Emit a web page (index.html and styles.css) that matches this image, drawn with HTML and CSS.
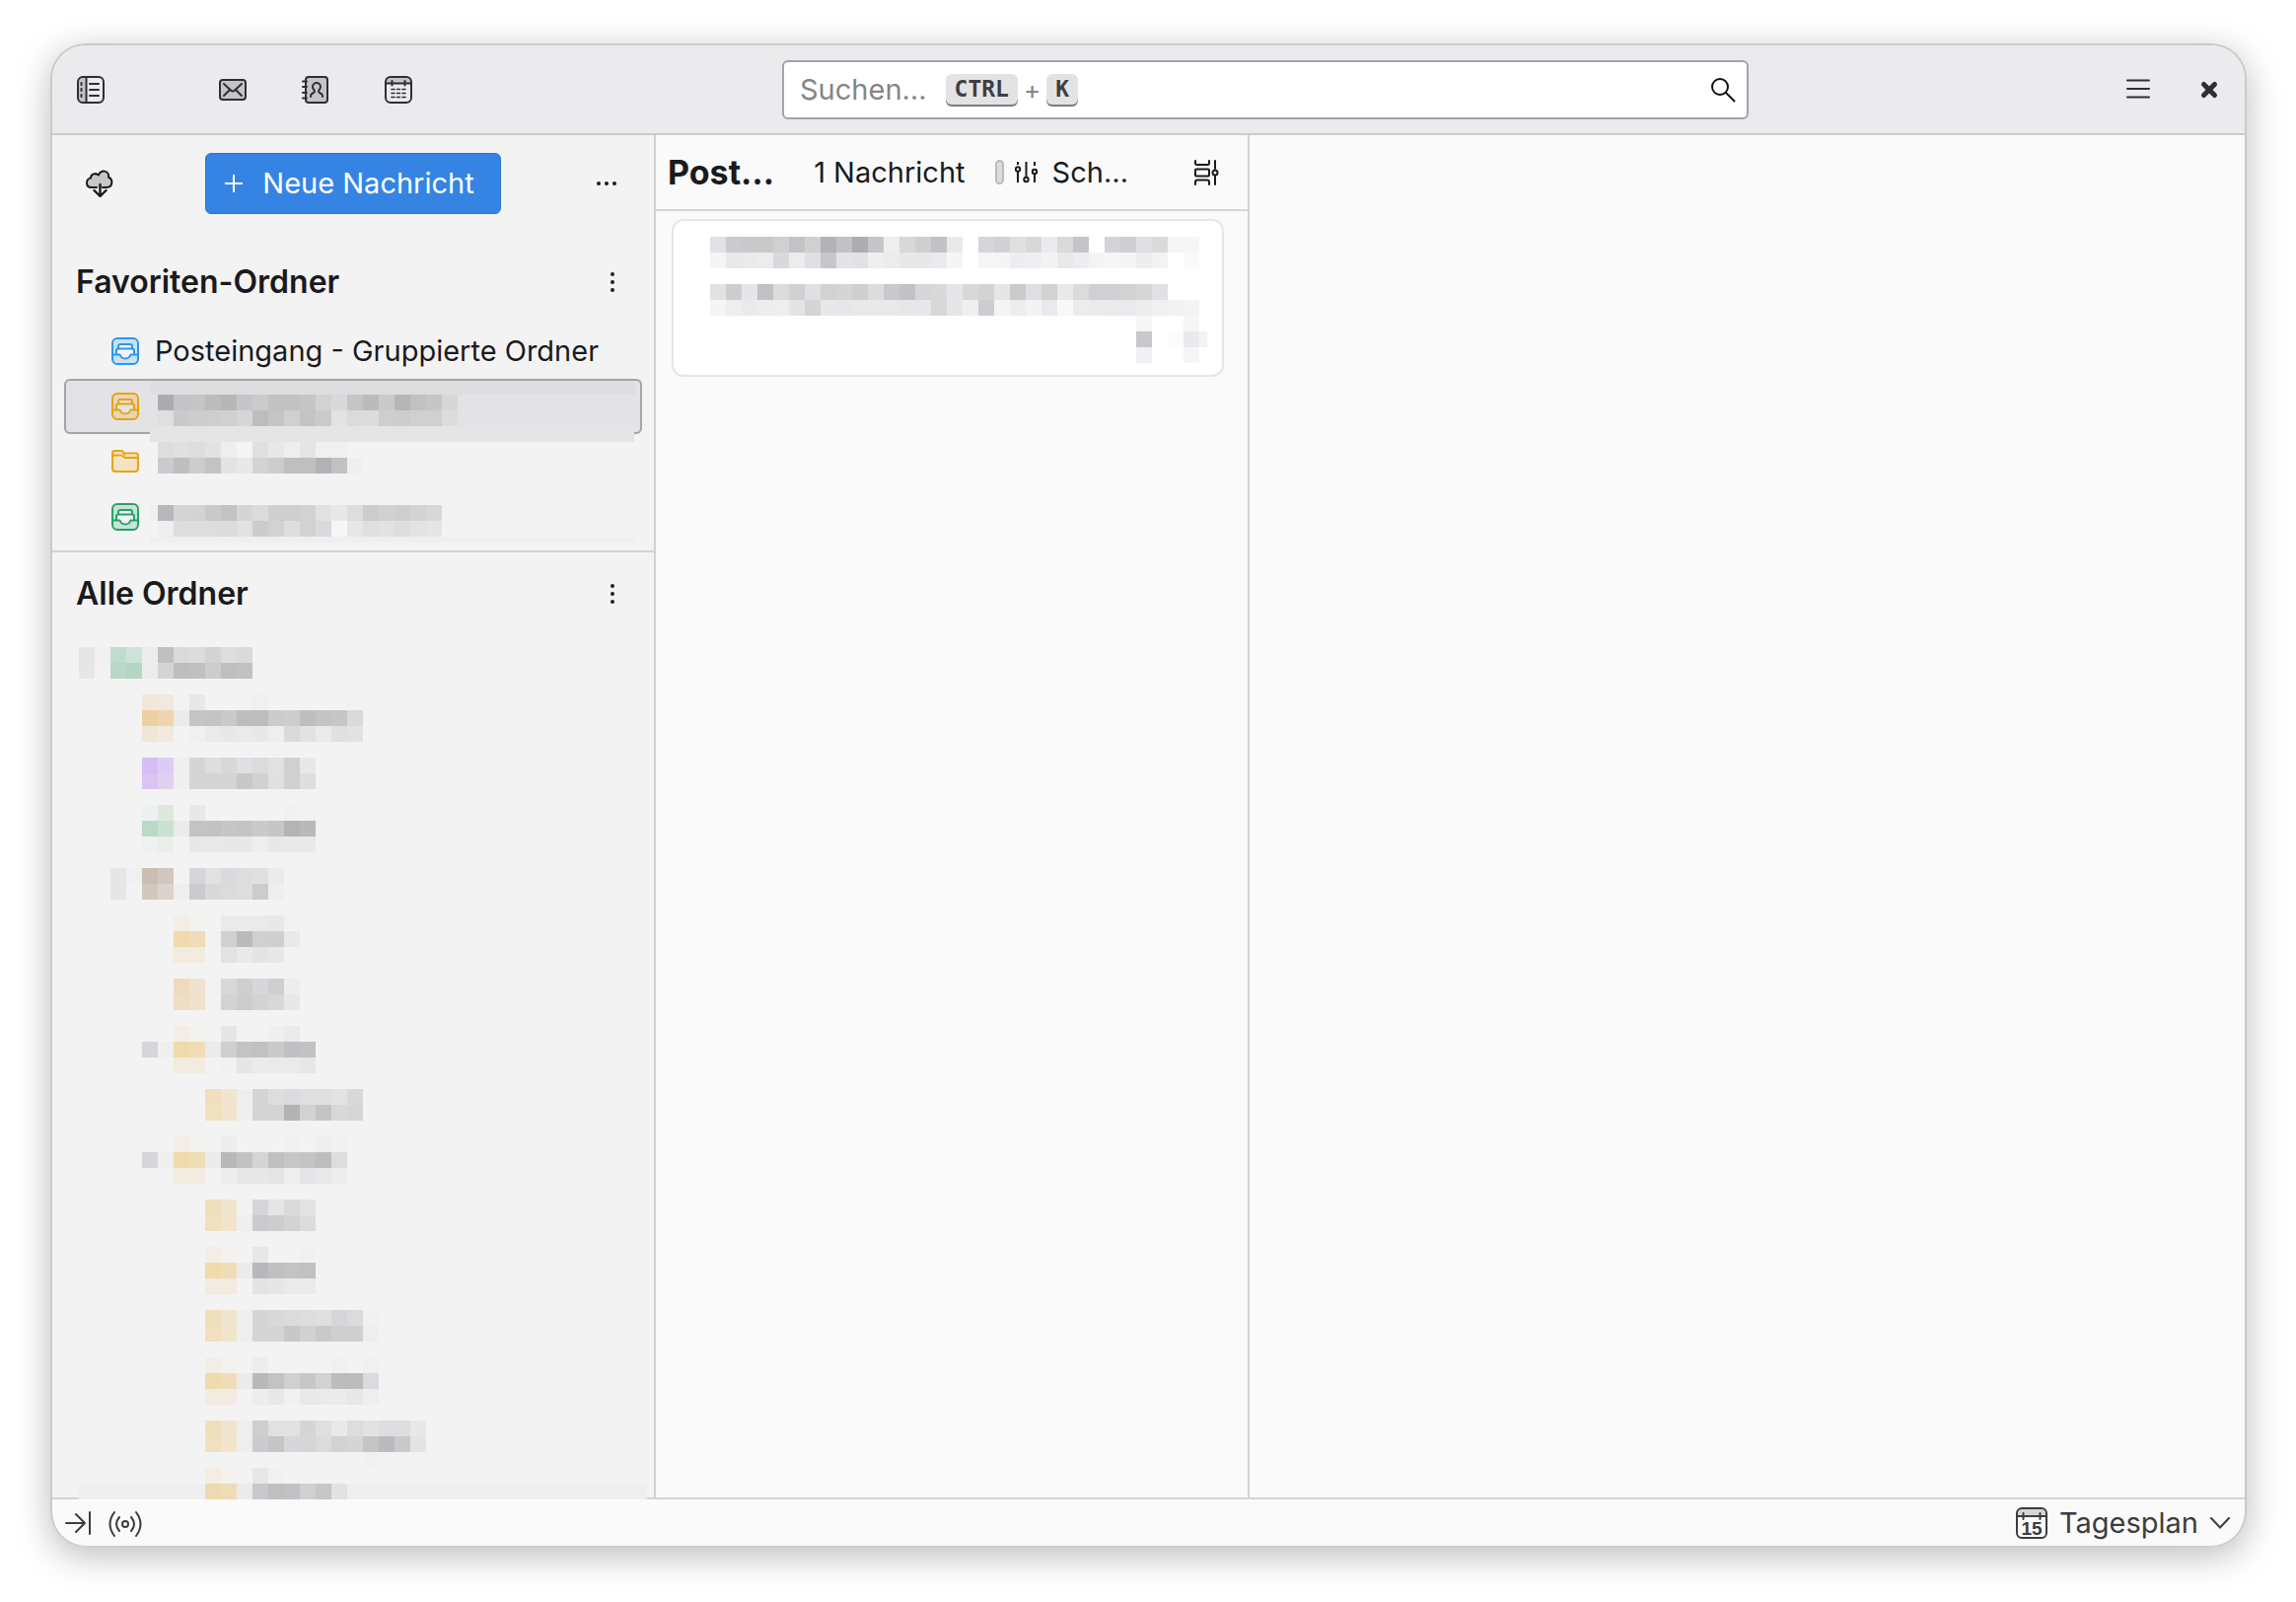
FILE: index.html
```html
<!DOCTYPE html>
<html lang="de">
<head>
<meta charset="utf-8">
<title>Posteingang</title>
<link rel="stylesheet" href="styles.css">
</head>
<body>
<div class="window">
  <header class="titlebar">
    <nav class="spaces" aria-label="Bereiche">
      <button class="icon-btn spaces-toggle" aria-label="Leiste umschalten">
        <svg class="icon" viewBox="0 0 28 28"><path class="tint" d="M6 1h3v26H6a5 5 0 0 1-5-5V6a5 5 0 0 1 5-5z"/><rect x="1" y="1" width="26" height="26" rx="5"/><path d="M9.500 1v26M13 8h9M13 14h9M13 20h9"/><path d="M4.500 7v2M4.500 13v2M4.500 19v2" stroke-width="2"/></svg>
      </button>
      <button class="icon-btn" aria-label="E-Mail">
        <svg class="icon" viewBox="0 0 28 28"><rect class="tint" x="1" y="4" width="26" height="20" rx="3"/><rect x="1" y="4" width="26" height="20" rx="3"/><path d="M5 8l7 6.500q2 2 4 0L23 8M5 20l6-6M23 20l-6-6"/></svg>
      </button>
      <button class="icon-btn" aria-label="Adressbuch">
        <svg class="icon" viewBox="0 0 28 28"><rect class="tint" x="4" y="1" width="22" height="26" rx="3"/><rect x="4" y="1" width="22" height="26" rx="3"/><path d="M1 5.500h4M1 11h4M1 17h4M1 22.500h4"/><path d="M9 21v-1c0-3 4-2 4-4.500 0-1.500-2-2-2-4.500a4 4 0 0 1 8 0c0 2.500-2 3-2 4.500 0 2.500 4 1.500 4 4.500v1"/></svg>
      </button>
      <button class="icon-btn" aria-label="Kalender">
        <svg class="icon" viewBox="0 0 28 28"><path class="tint" d="M1 8V5a4 4 0 0 1 4-4h18a4 4 0 0 1 4 4v3z"/><rect x="1" y="1" width="26" height="26" rx="5"/><path d="M1 7.500h26M7.500 5v4.500M20.500 5v4.500"/><path d="M7 13.500h3M12.500 13.500h3M18 13.500h3M7 17.500h3M12.500 17.500h3M18 17.500h3M7 21.500h3M12.500 21.500h3M18 21.500h3" stroke-width="1.600"/></svg>
      </button>
    </nav>
    <form class="search" role="search">
      <input class="search-input" id="search" type="text">
      <label class="search-hint" for="search">Suchen…<span class="keys"><kbd>CTRL</kbd>+<kbd>K</kbd></span></label>
      <button class="search-btn" type="button" aria-label="Suchen">
        <svg class="icon" viewBox="0 0 28 28"><circle cx="11" cy="11" r="8"/><path d="M17 17l8.500 8.500"/></svg>
      </button>
    </form>
    <div class="window-controls">
      <button class="icon-btn" aria-label="Menü">
        <svg class="icon" viewBox="0 0 28 28"><path d="M3 4.500h22M3 13h22M3 21.500h22"/></svg>
      </button>
      <button class="icon-btn" aria-label="Schließen">
        <svg class="icon close" viewBox="0 0 28 28"><path d="M8.500 8.500l11 11M19.500 8.500l-11 11"/></svg>
      </button>
    </div>
  </header>

  <main class="panes">
    <aside class="sidebar">
      <div class="folder-toolbar">
        <button class="icon-btn" aria-label="Nachrichten abrufen">
          <svg class="icon" viewBox="0 0 28 28"><path class="tint" d="M6 18a5 5 0 0 1-1-9.500c0-4 5-6 8-3C15 0 24 0 24 7c4 3 4 11-3 11z"/><path d="M11 18H6C-1 18 0 9 5 8.500 5 4 10 3 13 5.500 15 0 24 0 23 7.500c5 2.500 4.500 10.500-2 10.500h-4"/><path d="M14.500 15v11.500M8.500 21l6 6 6-6" stroke-width="2.400"/></svg>
        </button>
        <button class="compose">
          <svg class="plus" viewBox="0 0 20 20"><path d="M10 1v18M1 10h18"/></svg>Neue Nachricht
        </button>
        <button class="icon-btn" aria-label="Weitere Optionen">
          <svg class="icon dots" viewBox="0 0 28 28"><circle cx="6" cy="14" r="2"/><circle cx="14" cy="14" r="2"/><circle cx="22" cy="14" r="2"/></svg>
        </button>
      </div>

      <section class="favorites">
        <div class="section-head">
          <h2>Favoriten-Ordner</h2>
          <button class="icon-btn" aria-label="Optionen für Favoriten">
            <svg class="icon dots" viewBox="0 0 28 28"><circle cx="14" cy="6" r="2"/><circle cx="14" cy="14" r="2"/><circle cx="14" cy="22" r="2"/></svg>
          </button>
        </div>
        <ul class="folders">
          <li class="folder">
            <svg class="icon folder-icon blue" viewBox="0 0 28 28"><use href="#inbox"/></svg>
            <a class="folder-name" href="#">Posteingang - Gruppierte Ordner</a>
          </li>
          <li class="folder selected">
            <svg class="icon folder-icon amber" viewBox="0 0 28 28"><use href="#inbox"/></svg>
            <svg class="mosaic" width="500" height="64" data-cells="
              . acv c4v c5 bc b7 c6v cb c2 c2 c6 d2 d9v c5 bb ca b6 c1 c6 d7/
              . df ca cd ce d0 d6 bd c5 d0 c4 cb e3 db dc ce cd d0 d0 dc" data-top="16"><rect x="8" y="2" width="492" height="14" fill="#dedee0"/><rect x="8" y="16" width="488" height="32" fill="#e3e3e6"/><rect x="8" y="48" width="491" height="16" fill="#e5e5e8"/></svg>
          </li>
          <li class="folder">
            <svg class="icon folder-icon amber" viewBox="0 0 28 28"><path class="tint" d="M1 8V5a2 2 0 0 1 2-2h7l4 4h10a3 3 0 0 1 3 3v11a3 3 0 0 1-3 3H4a3 3 0 0 1-3-3z"/><path d="M1 8V5a2 2 0 0 1 2-2h7a2 2 0 0 1 2 1.500L13.500 7M1 7v14a3 3 0 0 0 3 3h20a3 3 0 0 0 3-3V8a2.500 2.500 0 0 0-2.500-2.500H13M1.500 7.500h6.500M10 7.500l4 2.500h13"/></svg>
            <svg class="mosaic" width="500" height="48" data-top="8" data-cells="
              . dd e0 dd e2 ee f5 e0 e8 ee e5 f0 f0/
              . cbv be cc c3 e3 e8v d3 cc bf bf b2v c1v ef"></svg>
          </li>
          <li class="folder">
            <svg class="icon folder-icon green" viewBox="0 0 28 28"><use href="#inbox"/></svg>
            <svg class="mosaic" width="500" height="54" data-top="16" data-cells="
              . b8v d4 d3 c9 c3 d5 db cf cf d2 e1 e8 dd cc d1 ce d3 d8/
              . ee dd dd dd dc e2 cc d2 de d2 dav f6 e7 df e2 dd e3 e5"><rect x="8" y="16" width="8" height="16" fill="#efefef"/><rect x="8" y="48" width="492" height="6" fill="#efeff1"/></svg>
          </li>
        </ul>
      </section>

      <section class="all-folders">
        <div class="section-head">
          <h2>Alle Ordner</h2>
          <button class="icon-btn" aria-label="Optionen für alle Ordner">
            <svg class="icon dots" viewBox="0 0 28 28"><circle cx="14" cy="6" r="2"/><circle cx="14" cy="14" r="2"/><circle cx="14" cy="22" r="2"/></svg>
          </button>
        </div>
        <ul class="tree" id="tree"></ul>
      </section>
    </aside>

    <section class="thread-pane">
      <div class="list-head">
        <h1>Post…</h1>
        <span class="count">1 Nachricht</span>
        <button class="quick-filter">
          <span class="pill"></span>
          <svg class="filter-icon" viewBox="0 0 24 24"><path d="M3 1v3M3 11v11M11.500 1v15M20 1v4M20 13v9"/><circle cx="3" cy="8.500" r="2.200"/><circle cx="11.500" cy="19" r="2.200"/><circle cx="20" cy="11" r="2.200"/></svg>
          Sch…
        </button>
        <button class="icon-btn display-btn" aria-label="Anzeigeoptionen">
          <svg class="icon" viewBox="0 0 28 28"><path d="M3 2v2.500q0 1.500 2 1.500h10q2 0 2-1.500V2M3 26v-2.500q0-2 2-2h10q2 0 2 2V26"/><rect x="3" y="10.500" width="14" height="7" rx="1"/><path d="M23 2v8M23 17v9"/><circle cx="23" cy="14" r="2.500"/></svg>
        </button>
      </div>
      <article class="card">
        <svg class="mosaic" width="512" height="128" data-top="0" data-cells="
          e2v cbv c9v c9 d0 c3v d0 b3v c2v adv c5v ee d8 cf c2v e9 . d6v d1v e0 d8 ebv da c5v . d4v cfv dfv da f6 f6/
          f5 e9v ea ec d9v ec e0v c7v e4v e2v ef ec e8 e8 ebv f5 . f6 f5 edv efv f3 e9 edv f4 f7 f5 ed f3 . fa/
          ./
          e2v cd e6v c1v dc d1 e0v d2 d5 cf dc c9v c2v d6v d9 e5v d8 d3 e6 cb dfv d2 e9 db d0v d0v d2 d6 e1v/
          f5 ee eav ed ee e4v d5 e8 e7v e9 e9 e9 e7 e7v d8 e6 ef cdv f4 ed f3 eav f8 ec eb ea eav ec f0 f2 f4/
          .*27 f6 . . f6/
          .*27 c8v . fb eav/
          .*27 f1v . . f6"><rect x="496" y="96" width="8" height="16" fill="#f3f3f3"/></svg>
      </article>
    </section>

    <section class="message-pane" aria-label="Nachricht"></section>
  </main>

  <footer class="statusbar">
    <button class="status-btn" aria-label="Leiste einblenden">
      <svg class="icon" viewBox="0 0 28 28"><path d="M2 14h19M12 5l9 9-9 9M26 3v22"/></svg>
    </button>
    <button class="status-btn" aria-label="Verbindung">
      <svg class="icon wide" viewBox="0 0 36 28"><circle cx="18" cy="15" r="3"/><path d="M12 8q-6 7 0 14M24 8q6 7 0 14M7 3q-9 12 0 24M29 3q9 12 0 24"/></svg>
    </button>
    <button class="today">
      <svg class="today-icon" viewBox="0 0 32 32"><path class="tint" d="M1 9V6a5 5 0 0 1 5-5h20a5 5 0 0 1 5 5v3z"/><rect x="1" y="1" width="30" height="30" rx="5"/><path d="M1 9h30M7.500 6v6M24.500 6v6"/><text x="16" y="28">15</text></svg>
      Tagesplan
      <svg class="chevron" viewBox="0 0 20 12"><path d="M1 1l9 9.500L19 1"/></svg>
    </button>
  </footer>
</div>

<svg width="0" height="0" class="defs" aria-hidden="true">
  <symbol id="inbox" viewBox="0 0 28 28">
    <path class="tint" fill-rule="evenodd" d="M6 1h16a5 5 0 0 1 5 5v16a5 5 0 0 1-5 5H6a5 5 0 0 1-5-5V6a5 5 0 0 1 5-5zM5 17h4q1 4 5 4t5-4h4v-4l-2-6H7l-2 6z"/>
    <rect x="1" y="1" width="26" height="26" rx="5"/>
    <path d="M1 17.500h7.500q1.500 4 5.500 4t5.500-4H27M5 17v-3.500q0-2 2-2h14q2 0 2 2V17M7 11V9q0-2 2-2h10q2 0 2 2v2"/>
  </symbol>
</svg>
<script src="app.js"></script>
</body>
</html>
```

FILE: styles.css
```css
* { box-sizing: border-box; }

body {
  margin: 0;
  padding: 44px 50px 56px 51px;
  height: 100vh;
  background: #fff;
  color: #1a1a1d;
  font-family: Inter, sans-serif;
  font-size: 29px;
  line-height: 36px;
}

button {
  border: 0;
  padding: 0;
  background: none;
  color: inherit;
  font: inherit;
}

h1, h2 {
  margin: 0;
  font-size: 32px;
  font-weight: 600;
  line-height: 40px;
}
h1 { font-size: 34px; font-weight: 700; }

ul { margin: 0; padding: 0; list-style: none; }

.defs { position: absolute; }

.window {
  display: flex;
  flex-direction: column;
  height: 100%;
  border: 2px solid #cacaca;
  border-bottom-width: 1px;
  border-radius: 36px;
  overflow: hidden;
  background: #fafafa;
  box-shadow: 0 9px 36px rgba(0, 0, 0, .27);
}

/* Icons */
.icon {
  display: block;
  width: 28px;
  height: 28px;
  fill: none;
  stroke: currentColor;
  stroke-width: 2;
  stroke-linecap: round;
  stroke-linejoin: round;
}
.icon.wide { width: 36px; }
.icon.close { stroke-width: 5; }
.icon.dots { fill: currentColor; stroke: none; }
.tint { fill: currentColor; fill-opacity: .2; stroke: none; }

.icon-btn {
  display: flex;
  align-items: center;
  justify-content: center;
  width: 56px;
  height: 56px;
  flex: none;
}

/* Title bar */
.titlebar {
  display: grid;
  grid-template-columns: 740fr 980fr 503fr;
  align-items: center;
  flex: none;
  height: 91px;
  border-bottom: 2px solid #cbcbcd;
  background: #ebebed;
  color: #2e2e33;
}
.spaces { display: flex; gap: 28px; padding-left: 11px; }
.spaces-toggle { margin-right: 60px; }

.search { position: relative; display: flex; height: 60px; }
.search-input {
  flex: 1;
  min-width: 0;
  border: 2px solid #a3a3ad;
  border-radius: 6px;
  background: #fff;
  padding: 0 64px 0 18px;
  font: inherit;
}
.search-hint {
  position: absolute;
  inset: 0 auto 0 18px;
  display: flex;
  align-items: center;
  gap: 19px;
  color: #858585;
}
.keys { display: flex; align-items: center; gap: 6px; font-size: 26px; }
kbd {
  padding: 0 9px;
  border-radius: 6px;
  background: #e3e3e5;
  box-shadow: 0 2px 0 #7b7b80;
  color: #3e3e44;
  font: bold 23px/31px "DejaVu Sans Mono", monospace;
}
.search-btn {
  position: absolute;
  inset: 0 12px 0 auto;
  display: flex;
  align-items: center;
  color: #111;
}
.window-controls {
  display: flex;
  justify-content: flex-end;
  gap: 16px;
  padding-right: 8px;
}

/* Panes */
.panes {
  display: grid;
  grid-template-columns: 612px 602px 1fr;
  flex: 1;
  min-height: 0;
}
.sidebar {
  display: flex;
  flex-direction: column;
  min-height: 0;
  border-right: 2px solid #d2d2d4;
  background: #f3f3f3;
}
.folder-toolbar {
  display: flex;
  align-items: center;
  justify-content: space-between;
  padding: 18px 20px 27px;
}
.compose {
  display: flex;
  align-items: center;
  justify-content: center;
  gap: 19px;
  width: 300px;
  height: 62px;
  padding-right: 8px;
  border: 1px solid #2f74c8;
  border-radius: 6px;
  background: #3584e4;
  color: #fff;
}
.plus { width: 20px; height: 20px; stroke: #fff; stroke-width: 2; }

.section-head {
  display: flex;
  align-items: center;
  justify-content: space-between;
  flex: none;
  height: 84px;
  padding: 0 14px 0 24px;
}
.favorites { padding-bottom: 6px; border-bottom: 2px solid #d2d2d4; }
.folders { padding: 0 12px; }
.folder {
  display: flex;
  align-items: center;
  height: 56px;
  padding-left: 48px;
  border-radius: 6px;
}
.folder.selected {
  background: #e3e3e6;
  box-shadow: inset 0 0 0 2px #a3a3ad;
}
.folder-icon { flex: none; margin-right: 3px; }
.folder-name { padding-left: 13px; color: inherit; text-decoration: none; white-space: nowrap; }
.blue { color: #2a96f5; }
.amber { color: #e9a30c; }
.green { color: #26a269; }

.mosaic { display: block; flex: none; shape-rendering: crispEdges; }
.folder .mosaic { position: relative; align-self: flex-start; }

.all-folders {
  display: flex;
  flex-direction: column;
  flex: 1;
  min-height: 0;
}
.tree {
  position: relative;
  z-index: 1;
  flex: 1;
  min-height: 0;
  margin-bottom: -2px;
  padding-left: 27px;
  overflow: hidden;
}
.tree li { display: flex; align-items: center; height: 56px; }

.thread-pane { border-right: 2px solid #d2d2d4; }
.list-head {
  display: flex;
  align-items: center;
  height: 77px;
  padding: 0 14px 0 12px;
  border-bottom: 2px solid #d6d6d9;
}
.count { margin: 0 30px 0 40px; }
.quick-filter { display: flex; align-items: center; }
.pill {
  width: 9px;
  height: 25px;
  margin-right: 11px;
  border: 2px solid #bcbcbc;
  border-radius: 5px;
  background: #dcdcdc;
}
.filter-icon {
  width: 24px;
  height: 24px;
  margin-right: 14px;
  fill: none;
  stroke: currentColor;
  stroke-width: 2;
}
.display-btn { margin-left: auto; }
.card {
  margin: 8px 24px 0 16px;
  padding: 16px 0 12px 37px;
  border: 2px solid #e6e6e7;
  border-radius: 12px;
  background: #fff;
}

/* Status bar */
.statusbar {
  display: flex;
  align-items: center;
  flex: none;
  gap: 16px;
  height: 49px;
  padding: 0 15px 0 12px;
  border-top: 2px solid #d4d4d6;
  color: #3c3c41;
}
.today { display: flex; align-items: center; gap: 12px; margin-left: auto; }
.today-icon, .chevron {
  fill: none;
  stroke: currentColor;
  stroke-width: 2;
  stroke-linecap: round;
}
.today-icon { width: 32px; height: 32px; }
.today-icon text {
  fill: currentColor;
  stroke: none;
  font: bold 19px "Liberation Sans", sans-serif;
  text-anchor: middle;
}
.chevron { width: 20px; height: 12px; }
```

FILE: app.js
```js
// Folder names are hidden behind 16px blocks. Rows are split by "/", cells by spaces.
// "c4" is a grey, "c4v" a grey with a cool tint, six digits a full colour, ".*4" four gaps.
const CELL = 16;

function color(token) {
  if (token.length === 6) return "#" + token;
  const g = parseInt(token.slice(0, 2), 16);
  return `rgb(${g},${g},${token.endsWith("v") ? g + 4 : g})`;
}

function paint(svg, cells, top) {
  cells.trim().split("/").forEach((row, r) => {
    let c = 0;
    row.trim().split(/\s+/).forEach((token) => {
      if (token[0] === ".") {
        c += token.includes("*") ? Number(token.split("*")[1]) : 1;
        return;
      }
      const rect = document.createElementNS("http://www.w3.org/2000/svg", "rect");
      rect.setAttribute("x", c * CELL);
      rect.setAttribute("y", top + r * CELL);
      rect.setAttribute("width", CELL);
      rect.setAttribute("height", CELL);
      rect.setAttribute("fill", color(token));
      svg.append(rect);
      c += 1;
    });
  });
}

const tree = [
  "e6 f0 c1dccf cee3d8 ec c0 da dc d3 de da/e6 . b9d8c9 b3d6c4 ec d4 be c0 cd bf c1",
  ".*4 f1e8d8 f2e8dc . e8 . . f2 f0/.*4 edd0a0 eed4b0 eb c5 c4 ca bd bd cb cd be c4 c6 da/.*4 f1e7d9 f2e9df . f0 ea e8 ea e8 ee da e2 ea e0 e2",
  ".*4 d7bdf5 dcccf3 ef d5 de d8 e0v dbv e1 d0 e8/.*4 dbc3f4 e0d1f3 ef d5 d4 d5 c8 d1 e0 d0 de",
  ".*4 ecf1ef dde8df . e8 .*5 f1 f2/.*4 bad9c7 c9e2d2 eb c3 c2 c6 c4 ca c6 b4 b9 f2/.*4 eff1f0 e9eee9 . e8 e9 e8 e8 ee e8 e9 e9 f2",
  ". f2 e6 f0 cbbeb0 d0c8bd . d6v e1 dav dd e0 eb/. . e6 . d1c9bd dcd3cd ee cbv d8 db dd cc ef",
  ".*6 f3ede6 f3f2ef . ea ea ea e8 f2/.*6 efdbab efddb8 f2 d0 bb d0 cf e9/.*6 f2ebdf f3eae0 . e3 e9 e4 e8 .",
  ".*6 eedbbf efe2d0 f2 d8 cf d7v cf ed/.*6 efddc4 efe1cc f2 d3 cd d3 d8 e8",
  ".*6 f3ede6 f3f2ef . e6 . . ef ea/.*3 f2 d6v ef efdbab efddb8 eb cf c3 c1 c9 c0v c2/.*6 f2ebdf f3eae0 . f1 e6 eb ea ea e7",
  "./.*8 f0dfbc f2e5d0 ee d5 dd dbv df df e3 d8/.*8 f0e0bd f2e4ca ee d4 d4 b3 d2 c4 d8 d6/.*13 f2",
  ".*6 f3ede6 f3f2ef . ed .*3 f1 . ef f1/.*3 f2 d6v ef efdbab efddb8 eb b8 c2 d5 c0 c7 c4 bd dd/.*6 f2ebdf f3eae0 . ed e7 e7 e5 ee e5v e8 ed",
  ".*8 f0dfbc f2e5d0 . d6v e5 da e3/.*8 f0e0bd f2e4ca ef cbv cd d3 dc",
  ".*8 f3ede6 f3f2ef . e7 . . f1/.*8 efdbab efddb8 eb b8v c0 c3 c1/.*8 f3eae0 f3eae0 . e4 e6 ea eb",
  ".*8 f0dfbc f2e5d0 ee d5 d9 db dd df d6v db f1/.*8 f0e0bd f2e4ca ee d5 d5 c8 d1 c9 cf cf ee",
  ".*8 f3ede6 f3f2ef . ed .*4 f0 . f0/.*8 efdbab efddb8 eb b9 c3 d0 c7 d2 bc bc dbv/.*8 f3eae0 f3eae0 . ed e8 f1 e9 ea eb e7 ee",
  "./.*8 f0dfbc f2e5d0 ee ce e1 e2 d5 df e9 dd e2 dev de e8/.*8 f0e0bd f2e4ca ee cbv c5 d7v d6 db d2 d5 c5 bbv ca e4/.*18 f1 f2",
  // The last visible row lies on a full-width band.
  ".*8 f3ede6 f3f2ef . e7 f1/" + "efeff1 ".repeat(8) +
    "eddab2 eedcb8 eb c9v bf c2v d1 c7 e2 " + "efeff1 ".repeat(19) + "/."
];

const list = document.getElementById("tree");
for (const cells of tree) {
  const item = document.createElement("li");
  const svg = document.createElementNS("http://www.w3.org/2000/svg", "svg");
  svg.setAttribute("class", "mosaic");
  svg.setAttribute("width", 36 * CELL);
  svg.setAttribute("height", cells.split("/").length * CELL);
  paint(svg, cells, 0);
  item.append(svg);
  list.append(item);
}

document.querySelectorAll(".mosaic[data-cells]").forEach((svg) => {
  paint(svg, svg.dataset.cells, Number(svg.dataset.top));
});
```
